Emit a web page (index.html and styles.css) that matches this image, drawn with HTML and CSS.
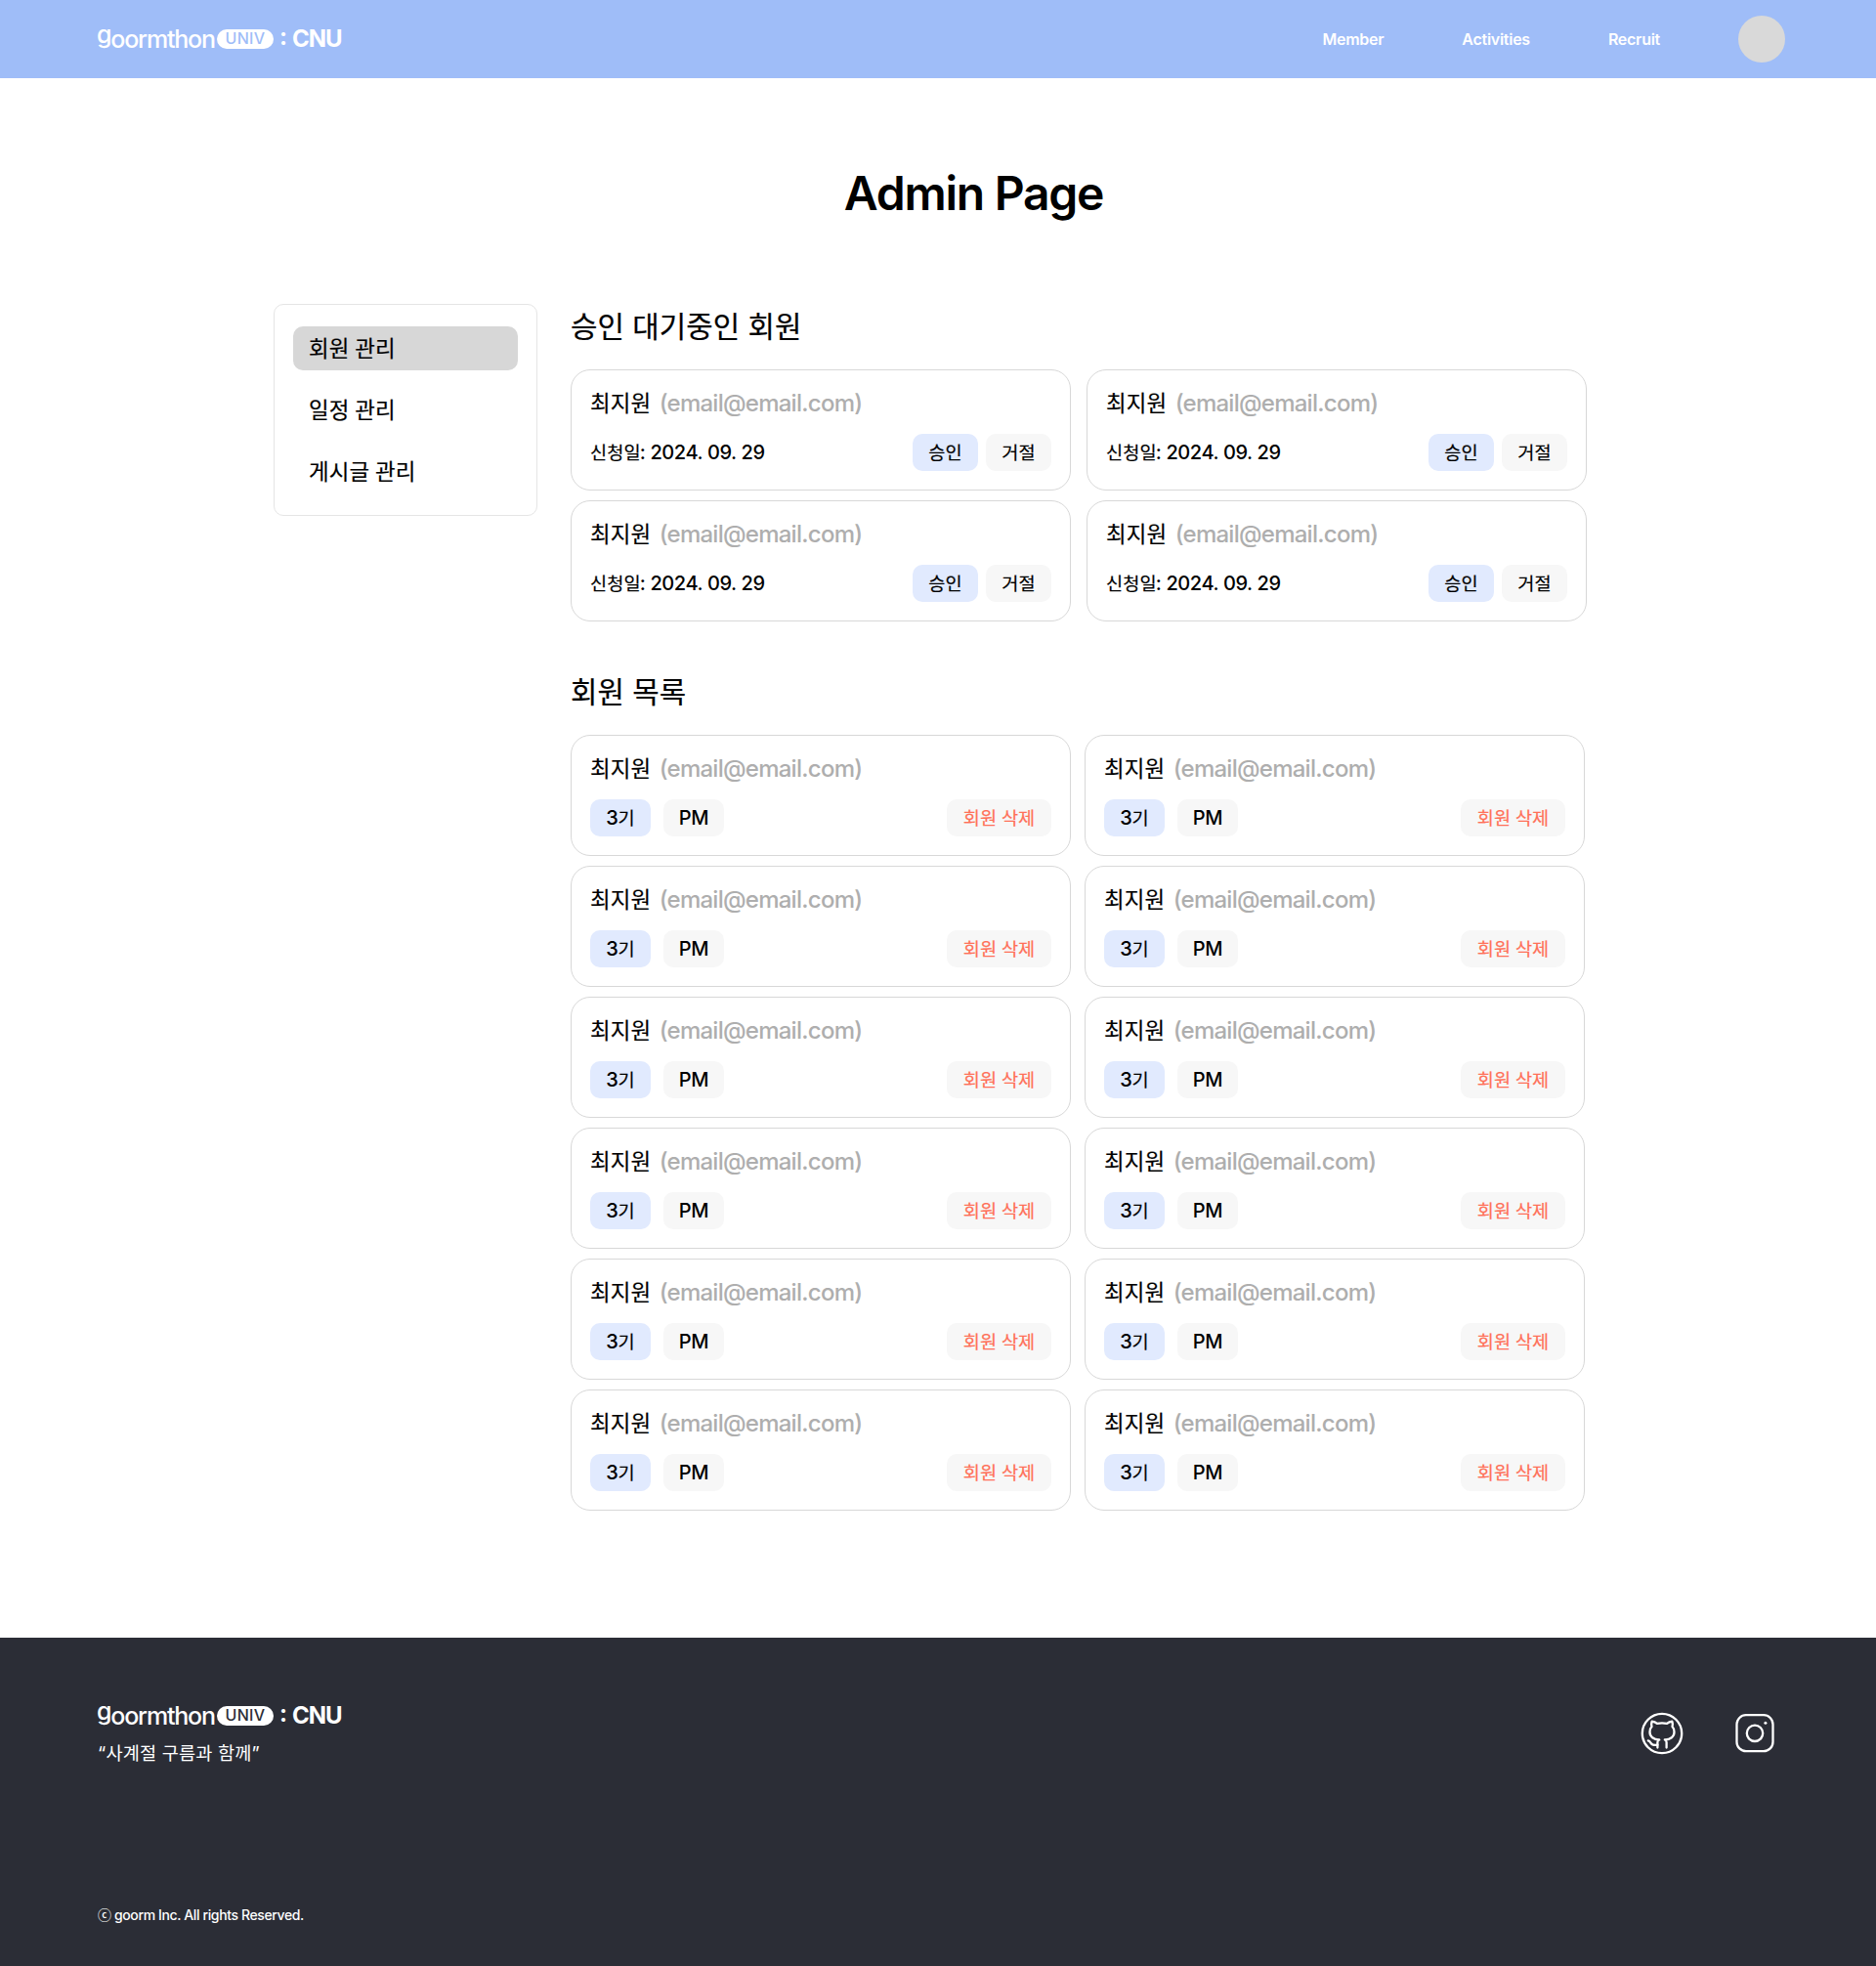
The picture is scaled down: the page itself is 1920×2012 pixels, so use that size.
FILE: index.html
```html
<!DOCTYPE html>
<html lang="ko">
<head>
<meta charset="utf-8">
<title>Admin Page</title>
<link rel="stylesheet" href="styles.css">
</head>
<body>
<header class="header">
  <div class="logo"><span class="wordmark"><span class="wordmark-g">g</span>oormthon</span><span class="pill">UNIV</span><span class="colon">:</span><span class="school">CNU</span></div>
  <nav class="nav"><a>Member</a><a>Activities</a><a>Recruit</a><span class="avatar"></span></nav>
</header>
<main class="main">
  <h1 class="page-title">Admin Page</h1>
  <div class="columns">
    <aside class="sidebar"><a class="side-item active">회원 관리</a><a class="side-item">일정 관리</a><a class="side-item">게시글 관리</a></aside>
    <div class="content">
      <section>
        <h2 class="section-title">승인 대기중인 회원</h2>
        <div class="grid pending">
          <article class="card"><div class="who"><span class="name">최지원</span><span class="mail">(email@email.com)</span></div><div class="row"><span class="date">신청일<span class="num">: 2024. 09. 29</span></span><button class="chip blue act">승인</button><button class="chip act">거절</button></div></article>
          <article class="card"><div class="who"><span class="name">최지원</span><span class="mail">(email@email.com)</span></div><div class="row"><span class="date">신청일<span class="num">: 2024. 09. 29</span></span><button class="chip blue act">승인</button><button class="chip act">거절</button></div></article>
          <article class="card"><div class="who"><span class="name">최지원</span><span class="mail">(email@email.com)</span></div><div class="row"><span class="date">신청일<span class="num">: 2024. 09. 29</span></span><button class="chip blue act">승인</button><button class="chip act">거절</button></div></article>
          <article class="card"><div class="who"><span class="name">최지원</span><span class="mail">(email@email.com)</span></div><div class="row"><span class="date">신청일<span class="num">: 2024. 09. 29</span></span><button class="chip blue act">승인</button><button class="chip act">거절</button></div></article>
        </div>
      </section>
      <section>
        <h2 class="section-title">회원 목록</h2>
        <div class="grid members">
          <article class="card"><div class="who"><span class="name">최지원</span><span class="mail">(email@email.com)</span></div><div class="row"><span class="chip blue tag"><span class="num">3</span>기</span><span class="chip tag num">PM</span><button class="chip del">회원 삭제</button></div></article>
          <article class="card"><div class="who"><span class="name">최지원</span><span class="mail">(email@email.com)</span></div><div class="row"><span class="chip blue tag"><span class="num">3</span>기</span><span class="chip tag num">PM</span><button class="chip del">회원 삭제</button></div></article>
          <article class="card"><div class="who"><span class="name">최지원</span><span class="mail">(email@email.com)</span></div><div class="row"><span class="chip blue tag"><span class="num">3</span>기</span><span class="chip tag num">PM</span><button class="chip del">회원 삭제</button></div></article>
          <article class="card"><div class="who"><span class="name">최지원</span><span class="mail">(email@email.com)</span></div><div class="row"><span class="chip blue tag"><span class="num">3</span>기</span><span class="chip tag num">PM</span><button class="chip del">회원 삭제</button></div></article>
          <article class="card"><div class="who"><span class="name">최지원</span><span class="mail">(email@email.com)</span></div><div class="row"><span class="chip blue tag"><span class="num">3</span>기</span><span class="chip tag num">PM</span><button class="chip del">회원 삭제</button></div></article>
          <article class="card"><div class="who"><span class="name">최지원</span><span class="mail">(email@email.com)</span></div><div class="row"><span class="chip blue tag"><span class="num">3</span>기</span><span class="chip tag num">PM</span><button class="chip del">회원 삭제</button></div></article>
          <article class="card"><div class="who"><span class="name">최지원</span><span class="mail">(email@email.com)</span></div><div class="row"><span class="chip blue tag"><span class="num">3</span>기</span><span class="chip tag num">PM</span><button class="chip del">회원 삭제</button></div></article>
          <article class="card"><div class="who"><span class="name">최지원</span><span class="mail">(email@email.com)</span></div><div class="row"><span class="chip blue tag"><span class="num">3</span>기</span><span class="chip tag num">PM</span><button class="chip del">회원 삭제</button></div></article>
          <article class="card"><div class="who"><span class="name">최지원</span><span class="mail">(email@email.com)</span></div><div class="row"><span class="chip blue tag"><span class="num">3</span>기</span><span class="chip tag num">PM</span><button class="chip del">회원 삭제</button></div></article>
          <article class="card"><div class="who"><span class="name">최지원</span><span class="mail">(email@email.com)</span></div><div class="row"><span class="chip blue tag"><span class="num">3</span>기</span><span class="chip tag num">PM</span><button class="chip del">회원 삭제</button></div></article>
          <article class="card"><div class="who"><span class="name">최지원</span><span class="mail">(email@email.com)</span></div><div class="row"><span class="chip blue tag"><span class="num">3</span>기</span><span class="chip tag num">PM</span><button class="chip del">회원 삭제</button></div></article>
          <article class="card"><div class="who"><span class="name">최지원</span><span class="mail">(email@email.com)</span></div><div class="row"><span class="chip blue tag"><span class="num">3</span>기</span><span class="chip tag num">PM</span><button class="chip del">회원 삭제</button></div></article>
        </div>
      </section>
    </div>
  </div>
</main>
<footer class="footer">
  <div class="footer-top">
    <div>
      <div class="logo dark"><span class="wordmark"><span class="wordmark-g">g</span>oormthon</span><span class="pill">UNIV</span><span class="colon">:</span><span class="school">CNU</span></div>
      <p class="slogan">“사계절 구름과 함께”</p>
    </div>
    <div class="social">
      <svg width="44" height="44" viewBox="0 0 44 44" fill="none" stroke="#fff" stroke-width="2.3" stroke-linecap="round" stroke-linejoin="round"><circle cx="22" cy="22" r="20.2"/><path d="M17.400 36.500V31C17.400 29.800 18 29 19.200 28.500C13.500 28.300 9.500 25.500 9.500 20.500C9.500 18 10.200 16.300 11.500 15C11 13.200 11 11.500 11.700 9.600C13.800 9.800 15.500 10.600 17 11.900C20.500 11.100 23.500 11.100 27 11.900C28.500 10.600 30.200 9.800 32.300 9.600C33 11.500 33 13.200 32.500 15C33.800 16.300 34.500 18 34.500 20.500C34.500 25.500 30.500 28.300 24.800 28.500C26 29 26.600 29.800 26.600 31V36.500"/><path d="M17.400 33.700C14 34.200 11.800 33.700 10.600 31.800C9.700 30.400 8.800 29.500 7.800 29.400"/></svg>
      <svg width="44" height="44" viewBox="0 0 44 44" fill="none" stroke="#fff" stroke-width="2.3"><rect x="3.500" y="3.200" width="37" height="37" rx="9.500"/><circle cx="22" cy="21.800" r="8.200"/><circle cx="32.900" cy="11.200" r="1.500" fill="#fff" stroke="none"/></svg>
    </div>
  </div>
  <p class="copyright">ⓒ goorm Inc. All rights Reserved.</p>
</footer>
</body>
</html>
```
FILE: styles.css
```css
* { box-sizing: border-box; margin: 0; padding: 0; }
body { font-family: Inter, "Noto Sans CJK KR", sans-serif; font-weight: 400; color: #000; background: #fff; line-height: 1.2; }
button { border: 0; font: inherit; color: inherit; }
.header { height: 80px; background: #9fbdf8; padding: 0 93px 0 100px; display: flex; justify-content: space-between; align-items: center; }
.logo { display: flex; align-items: center; height: 22px; color: #fff; }
.wordmark { width: 123px; margin-left: -1px; font-size: 25px; line-height: 22px; font-weight: 550; letter-spacing: -1.2px; }
.wordmark-g { vertical-align: 5px; line-height: 1px; }
.pill { width: 58px; height: 20px; border-radius: 10px; background: #fff; color: #9fbdf8; font-size: 16px; font-weight: 500; line-height: 19px; text-align: center; letter-spacing: 0.3px; }
.dark .pill { color: #2b2d36; }
.colon { margin-left: 6px; padding-bottom: 5px; width: 13px; font-size: 24px; font-weight: 700; line-height: 22px; }
.school { font-size: 24px; font-weight: 700; line-height: 22px; letter-spacing: -1px; }
.nav { display: flex; align-items: center; gap: 80px; color: #fff; font-size: 16px; font-weight: 600; letter-spacing: -0.27px; }
.nav a { padding-top: 1px; }
.avatar { width: 48px; height: 48px; border-radius: 50%; background: #d9d9d9; }
.main { height: 1596px; padding: 89px 280px 0; }
.page-title { padding-left: 73px; height: 142px; font-size: 48px; line-height: 58px; font-weight: 600; text-align: center; letter-spacing: -1.25px; }
.columns { display: flex; gap: 34px; align-items: flex-start; }
.sidebar { width: 270px; height: 217px; padding: 22px 19px; border: 1px solid #e5e5e5; border-radius: 10px; display: flex; flex-direction: column; gap: 18px; }
.side-item { height: 45px; padding-left: 16px; border-radius: 10px; font-size: 22.4px; line-height: 45px; }
.side-item.active { background: #d7d7d7; }
.side-item, .section-title, .name, .date, .chip { letter-spacing: 0.005em; word-spacing: -0.5px; -webkit-text-stroke: 0.2px; }
.content { display: flex; flex-direction: column; gap: 49px; }
.section-title { height: 67px; font-size: 29.8px; line-height: 46px; font-weight: 400; }
.grid { display: grid; grid-template-columns: 512px 512px; row-gap: 10px; }
.pending { column-gap: 16px; }
.members { column-gap: 14px; }
.card { height: 124px; border: 1px solid #d8d8d8; border-radius: 20px; padding: 19px; display: flex; flex-direction: column; justify-content: space-between; }
.who { display: flex; gap: 8.5px; line-height: 29px; }
.name { font-size: 22.4px; }
.mail { font-size: 24px; color: #aeaeae; font-weight: 450; letter-spacing: -0.74px; }
.row { display: flex; align-items: center; height: 38px; font-size: 18.6px; }
.date { flex: 1; }
.num { font-size: 20px; font-weight: 500; letter-spacing: -0.4px; word-spacing: 0; -webkit-text-stroke: 0; }
.date .num { margin-left: -0.8px; }
.chip { height: 38px; line-height: 39px; border-radius: 10px; text-align: center; background: #f7f7f7; }
.chip.num { letter-spacing: -0.4px; -webkit-text-stroke: 0; }
.blue { background: #e1eafe; }
.act { width: 67px; margin-left: 8px; }
.tag { width: 62px; margin-right: 13px; }
.del { width: 107px; margin-left: auto; color: #ff7058; }
.footer { height: 336px; background: #2b2d36; color: #fff; padding: 69px 102px 0 100px; }
.footer-top { display: flex; justify-content: space-between; height: 207px; }
.slogan { font-size: 18.6px; line-height: 24px; margin-top: 15px; letter-spacing: 0.01em; }
.social { display: flex; gap: 51px; padding-top: 7px; }
.copyright { font-size: 14px; font-weight: 500; letter-spacing: -0.38px; }
```
